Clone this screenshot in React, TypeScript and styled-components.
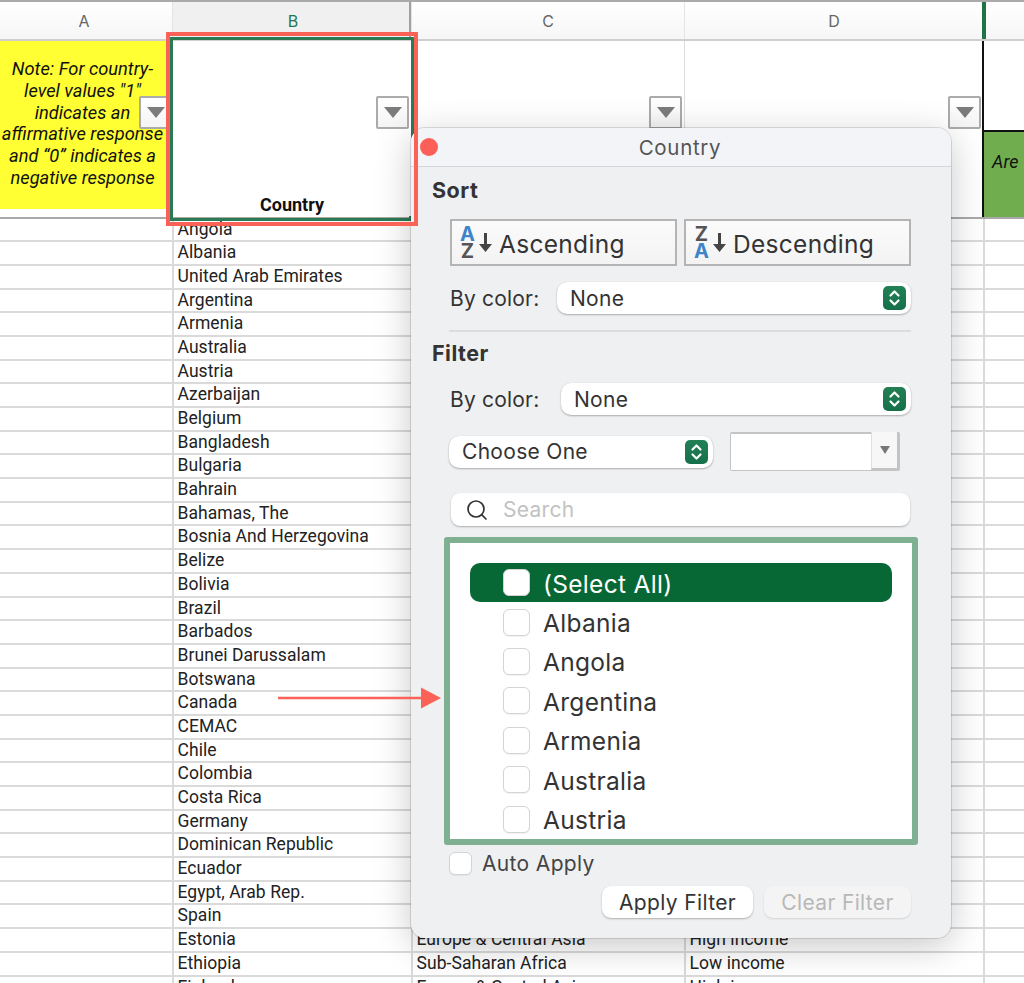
import React from "react";
import styled, { createGlobalStyle } from "styled-components";
import { Search as SearchGlyph } from "lucide-react";

const Global = createGlobalStyle`
  html, body { margin: 0; padding: 0; background: #fff; overflow: hidden; }
  * { box-sizing: border-box; }
`;

const COLS = "172px 239px 273px 299px 1fr";
const UI = `Inter, "Noto Sans", sans-serif`;

const Sheet = styled.div`
  position: relative;
  width: 1024px;
  height: 983px;
  overflow: hidden;
  background: #fff;
  font-family: Roboto, "Liberation Sans", sans-serif;
  color: #222;
`;
const ColumnHeaders = styled.div`
  display: grid;
  grid-template-columns: ${COLS};
  height: 41px;
  border-top: 2px solid #aaa;
  border-bottom: 2px solid #cfcfcf;
  background: linear-gradient(#fff, #f6f6f6);
`;
const ColumnHead = styled.div<{ $active?: boolean; $shift?: number }>`
  display: flex;
  align-items: center;
  justify-content: center;
  font: 16px ${UI};
  padding-left: ${(p) => Math.max(p.$shift ?? 0, 0)}px;
  padding-right: ${(p) => Math.max(-(p.$shift ?? 0), 0)}px;
  color: ${(p) => (p.$active ? "#1f7a4d" : "#666")};
  background: ${(p) => (p.$active ? "#f0f0f0" : "transparent")};
  border-left: 1px solid #e4e4e4;
  border-right: ${(p) => (p.$active ? "2px solid #a0a0a0" : "0")};
  &:first-child { border-left: 0; }
`;
const EdgeHead = styled.div`
  border-left: 4px solid #217346;
  margin-left: -1px;
`;
const TitleRow = styled.div`
  display: grid;
  grid-template-columns: ${COLS};
  height: 177.5px;
  border-bottom: 2px solid #a9a9a9;
`;
const TitleCell = styled.div`
  position: relative;
  display: flex;
  align-items: flex-end;
  justify-content: center;
  border-left: 1px solid #dcdcdc;
  &:first-child { border-left: 0; }
`;
const NoteCell = styled(TitleCell)`
  align-items: flex-start;
  padding-bottom: 8px;
`;
const NoteFill = styled.div`
  width: 100%;
  height: 168px;
  background: #ffff33;
  padding: 17px 7px 0 0;
  text-align: center;
  font-size: 18.3px;
  font-style: italic;
  line-height: 21.8px;
  color: #111;
  white-space: nowrap;
`;
const CountryHead = styled.div`
  font-size: 18px;
  font-weight: 700;
  color: #111;
  padding-bottom: 2px;
`;
const EdgeCell = styled.div`
  display: flex;
  flex-direction: column;
  justify-content: flex-end;
  border-left: 2px solid #111;
  margin-left: -1px;
`;
const GreenHead = styled.div`
  height: 87px;
  background: #70ad4e;
  border-top: 2px solid #111;
  padding: 19px 0 0 8px;
  font-size: 18px;
  font-style: italic;
  color: #111;
`;
const FilterBox = styled.div<{ $right: number }>`
  position: absolute;
  top: 55px;
  right: ${(p) => p.$right}px;
  width: 33px;
  height: 33px;
  display: flex;
  align-items: center;
  justify-content: center;
  background: linear-gradient(#fff, #f4f4f4);
  border: 2px solid #ababab;
  border-radius: 2px;
`;
const DataRow = styled.div`
  display: grid;
  grid-template-columns: ${COLS};
  height: 23.7px;
  border-bottom: 2px solid #dadada;
`;
const DataCell = styled.div`
  display: flex;
  align-items: center;
  padding: 0 0 2px 3.5px;
  font-size: 17.5px;
  letter-spacing: 0.06px;
  white-space: nowrap;
  border-left: 2px solid #dadada;
  &:first-child { border-left: 0; }
`;
const Selection = styled.div`
  position: absolute;
  left: 170px;
  top: 37px;
  width: 244px;
  height: 184px;
  border: 3px solid #2b7a56;
`;
const Handle = styled.div`
  position: absolute;
  right: -3px;
  bottom: -3px;
  width: 5px;
  height: 5px;
  background: #2b7a56;
`;
const Highlight = styled.div`
  position: absolute;
  left: 166px;
  top: 32px;
  width: 252px;
  height: 194px;
  border: 4px solid #fb6257;
  z-index: 3;
`;
const ArrowMark = styled.svg`
  position: absolute;
  left: 276px;
  top: 686px;
  z-index: 3;
`;

const Panel = styled.div`
  position: absolute;
  left: 411px;
  top: 128px;
  width: 540px;
  height: 810px;
  z-index: 2;
  background: #eff0f2;
  border-radius: 14px;
  box-shadow: 0 0 0 1px rgba(0, 0, 0, 0.12), 0 8px 36px rgba(0, 0, 0, 0.22);
  font-family: ${UI};
  overflow: hidden;
  color: #333;
`;
const TitleBar = styled.div`
  position: relative;
  height: 39px;
  display: flex;
  align-items: center;
  justify-content: center;
  padding-right: 2px;
  background: #f3f4f8;
  border-bottom: 1px solid #d6d6d6;
  font-size: 20.5px;
  color: #555;
  letter-spacing: 0.7px;
`;
const CloseDot = styled.div`
  position: absolute;
  left: 9px;
  top: 10px;
  width: 18px;
  height: 18px;
  border-radius: 50%;
  background: #fc5f57;
`;
const Body = styled.div`
  display: flex;
  flex-direction: column;
  padding: 0 40px 0 21px;
`;
const SectionTitle = styled.div<{ $top: number }>`
  margin-top: ${(p) => p.$top}px;
  height: 22px;
  line-height: 22px;
  font-size: 21.5px;
  font-weight: 700;
  letter-spacing: 0.5px;
  color: #333;
`;
const SortRow = styled.div`
  display: flex;
  gap: 7px;
  margin: 18px 0 0 18px;
`;
const SortButton = styled.div`
  width: 227px;
  height: 47px;
  display: flex;
  align-items: center;
  gap: 3px;
  padding-left: 7px;
  background: linear-gradient(#fbfbfb, #f3f3f3);
  border: 2px solid #b4b4b4;
  font-size: 24.5px;
  letter-spacing: 0.3px;
  color: #333;
`;
const SortLabel = styled.span`
  margin-left: 4px;
  padding-top: 2px;
`;
const AzStack = styled.div`
  display: flex;
  flex-direction: column;
  align-items: center;
  width: 17px;
  font-size: 20px;
  font-weight: 700;
  line-height: 17px;
  letter-spacing: 0;
`;
const Letter = styled.span<{ $blue?: boolean }>`
  color: ${(p) => (p.$blue ? "#3f83c8" : "#555")};
`;
const FieldRow = styled.div<{ $top: number; $h: number; $label: number }>`
  display: grid;
  grid-template-columns: ${(p) => p.$label}px 1fr;
  align-items: center;
  height: ${(p) => p.$h}px;
  margin: ${(p) => p.$top}px 0 0 18px;
`;
const FieldLabel = styled.div`
  font-size: 21px;
  letter-spacing: 0.2px;
  color: #333;
`;
const SelectBox = styled.div<{ $w?: number }>`
  display: flex;
  align-items: center;
  justify-content: space-between;
  width: ${(p) => (p.$w ? `${p.$w}px` : "100%")};
  height: 32px;
  padding: 0 5px 0 13px;
  background: #fff;
  border-radius: 10px;
  box-shadow: 0 1px 2px rgba(0, 0, 0, 0.28), 0 0 1px rgba(0, 0, 0, 0.12);
  font-size: 21px;
  letter-spacing: 0.3px;
  color: #333;
`;
const Stepper = styled.div`
  width: 23px;
  height: 24px;
  display: flex;
  align-items: center;
  justify-content: center;
  border-radius: 5px;
  background: linear-gradient(#228055, #15704a);
`;
const Divider = styled.div`
  height: 2px;
  margin: 17px 0 0 17px;
  background: #dcdcde;
`;
const CriteriaRow = styled.div`
  display: flex;
  align-items: center;
  height: 39px;
  margin: 17px 0 0 17px;
  gap: 17px;
`;
const Combo = styled.div`
  position: relative;
  width: 170px;
  height: 39px;
  background: #fff;
  border: 1px solid #c4c4c4;
  border-top: 2px solid #c4c4c4;
  border-radius: 2px;
`;
const ComboArrow = styled.div`
  position: absolute;
  right: 0;
  top: -2px;
  bottom: 0;
  width: 28px;
  display: flex;
  justify-content: center;
  padding-top: 14px;
  background: #f7f7f7;
  border-left: 1px solid #dfdfdf;
  border-right: 2px solid #c4c4c4;
  border-bottom: 2px solid #c4c4c4;
`;
const SearchBox = styled.div`
  display: flex;
  align-items: center;
  gap: 14px;
  height: 33px;
  width: 459px;
  margin: 22px 0 0 19px;
  padding-left: 14px;
  background: #fff;
  border-radius: 9px;
  box-shadow: 0 1px 2px rgba(0, 0, 0, 0.28);
  font-size: 21px;
  letter-spacing: 0.3px;
  color: #c2c2c2;
`;
const ListFrame = styled.div`
  width: 474px;
  height: 308px;
  margin: 11px 0 0 12px;
  padding: 20px 20px 0;
  overflow: hidden;
  background: #fff;
  border: 6px solid #7fb092;
  border-radius: 3px;
`;
const ListRow = styled.div<{ $on?: boolean }>`
  display: flex;
  align-items: center;
  gap: 13px;
  height: 39.4px;
  padding-left: 33px;
  border-radius: 10px;
  font-size: 24.5px;
  letter-spacing: 0.3px;
  color: ${(p) => (p.$on ? "#fff" : "#333")};
  background: ${(p) => (p.$on ? "#086835" : "transparent")};
`;
const ListLabel = styled.span`
  padding-top: 2px;
`;
const CheckBox = styled.div<{ $size: number }>`
  width: ${(p) => p.$size}px;
  height: ${(p) => p.$size}px;
  flex: none;
  background: #fff;
  border: 1px solid #d4d4d4;
  border-radius: 6px;
  box-shadow: 0 1px 1px rgba(0, 0, 0, 0.06);
`;
const AutoRow = styled.div`
  display: flex;
  align-items: center;
  gap: 10px;
  height: 24px;
  margin: 6px 0 0 17px;
  font-size: 21px;
  letter-spacing: 0.35px;
  color: #444;
`;
const Footer = styled.div`
  display: flex;
  justify-content: flex-end;
  gap: 11px;
  margin-top: 11px;
`;
const FooterButton = styled.div<{ $w: number; $off?: boolean }>`
  width: ${(p) => p.$w}px;
  height: 32px;
  display: flex;
  align-items: center;
  justify-content: center;
  border-radius: 9px;
  font-size: 21px;
  letter-spacing: 0.35px;
  color: ${(p) => (p.$off ? "#b8b8b8" : "#333")};
  background: ${(p) => (p.$off ? "#f4f4f5" : "#fff")};
  box-shadow: 0 1px 2px rgba(0, 0, 0, ${(p) => (p.$off ? 0.12 : 0.28)});
`;

const Triangle = () => (
  <svg width="18" height="11" viewBox="0 0 18 11"><path d="M0 0H18L9 11Z" fill="#7b7b7b" /></svg>
);
const StepGlyph = () => (
  <svg width="13" height="18" viewBox="0 0 13 18" fill="none" stroke="#fff" strokeWidth="2.2" strokeLinecap="round" strokeLinejoin="round">
    <path d="M2.5 6.5 6.5 2.5 10.5 6.5" />
    <path d="M2.5 11.5 6.5 15.5 10.5 11.5" />
  </svg>
);
const DownArrow = () => (
  <svg width="13" height="19" viewBox="0 0 13 19" fill="#444"><path d="M5 0h3v11h5l-6.500 8L0 11h5z" /></svg>
);

const COUNTRIES: [string, string?, string?][] = [
  ["Angola"], ["Albania"], ["United Arab Emirates"], ["Argentina"], ["Armenia"], ["Australia"], ["Austria"],
  ["Azerbaijan"], ["Belgium"], ["Bangladesh"], ["Bulgaria"], ["Bahrain"], ["Bahamas, The"],
  ["Bosnia And Herzegovina"], ["Belize"], ["Bolivia"], ["Brazil"], ["Barbados"], ["Brunei Darussalam"],
  ["Botswana"], ["Canada"], ["CEMAC"], ["Chile"], ["Colombia"], ["Costa Rica"], ["Germany"],
  ["Dominican Republic"], ["Ecuador"], ["Egypt, Arab Rep."], ["Spain"],
  ["Estonia", "Europe & Central Asia", "High income"],
  ["Ethiopia", "Sub-Saharan Africa", "Low income"],
  ["Finland", "Europe & Central Asia", "High income"],
];
const LIST = ["Albania", "Angola", "Argentina", "Armenia", "Australia", "Austria"];

export default function App() {
  return (
    <Sheet>
      <Global />
      <ColumnHeaders>
        <ColumnHead $shift={-4}>A</ColumnHead>
        <ColumnHead $active $shift={4}>B</ColumnHead>
        <ColumnHead>C</ColumnHead>
        <ColumnHead>D</ColumnHead>
        <EdgeHead />
      </ColumnHeaders>
      <TitleRow>
        <NoteCell>
          <NoteFill>
            Note: For country-<br />level values "1"<br />indicates an<br />affirmative response<br />and “0” indicates a<br />negative response
          </NoteFill>
          <FilterBox $right={0}><Triangle /></FilterBox>
        </NoteCell>
        <TitleCell>
          <CountryHead>Country</CountryHead>
          <FilterBox $right={2}><Triangle /></FilterBox>
        </TitleCell>
        <TitleCell><FilterBox $right={2}><Triangle /></FilterBox></TitleCell>
        <TitleCell><FilterBox $right={2}><Triangle /></FilterBox></TitleCell>
        <EdgeCell><GreenHead>Are</GreenHead></EdgeCell>
      </TitleRow>
      {COUNTRIES.map(([name, region, income]) => (
        <DataRow key={name}>
          <DataCell />
          <DataCell>{name}</DataCell>
          <DataCell>{region}</DataCell>
          <DataCell>{income}</DataCell>
          <DataCell />
        </DataRow>
      ))}
      <Selection><Handle /></Selection>
      <Highlight />
      <ArrowMark width="166" height="24" viewBox="0 0 166 24">
        <path d="M2 12H146" stroke="#fb6257" strokeWidth="2.5" />
        <path d="M145 1.500 165 12 145 22.500Z" fill="#fb6257" />
      </ArrowMark>
      <Panel>
        <TitleBar><CloseDot />Country</TitleBar>
        <Body>
          <SectionTitle $top={12}>Sort</SectionTitle>
          <SortRow>
            <SortButton>
              <AzStack><Letter $blue>A</Letter><Letter>Z</Letter></AzStack>
              <DownArrow />
              <SortLabel>Ascending</SortLabel>
            </SortButton>
            <SortButton>
              <AzStack><Letter>Z</Letter><Letter $blue>A</Letter></AzStack>
              <DownArrow />
              <SortLabel>Descending</SortLabel>
            </SortButton>
          </SortRow>
          <FieldRow $top={16} $h={31} $label={107}>
            <FieldLabel>By color:</FieldLabel>
            <SelectBox>None<Stepper><StepGlyph /></Stepper></SelectBox>
          </FieldRow>
          <Divider />
          <SectionTitle $top={10}>Filter</SectionTitle>
          <FieldRow $top={19} $h={32} $label={111}>
            <FieldLabel>By color:</FieldLabel>
            <SelectBox>None<Stepper><StepGlyph /></Stepper></SelectBox>
          </FieldRow>
          <CriteriaRow>
            <SelectBox $w={264}>Choose One<Stepper><StepGlyph /></Stepper></SelectBox>
            <Combo><ComboArrow><svg width="10" height="8" viewBox="0 0 10 8"><path d="M0 0H10L5 8Z" fill="#777" /></svg></ComboArrow></Combo>
          </CriteriaRow>
          <SearchBox><SearchGlyph size={24} color="#333" strokeWidth={1.7} />Search</SearchBox>
          <ListFrame>
            <ListRow $on><CheckBox $size={27} /><ListLabel>(Select All)</ListLabel></ListRow>
            {LIST.map((c) => (
              <ListRow key={c}><CheckBox $size={27} /><ListLabel>{c}</ListLabel></ListRow>
            ))}
          </ListFrame>
          <AutoRow><CheckBox $size={23} />Auto Apply</AutoRow>
          <Footer>
            <FooterButton $w={151}>Apply Filter</FooterButton>
            <FooterButton $w={147} $off>Clear Filter</FooterButton>
          </Footer>
        </Body>
      </Panel>
    </Sheet>
  );
}
